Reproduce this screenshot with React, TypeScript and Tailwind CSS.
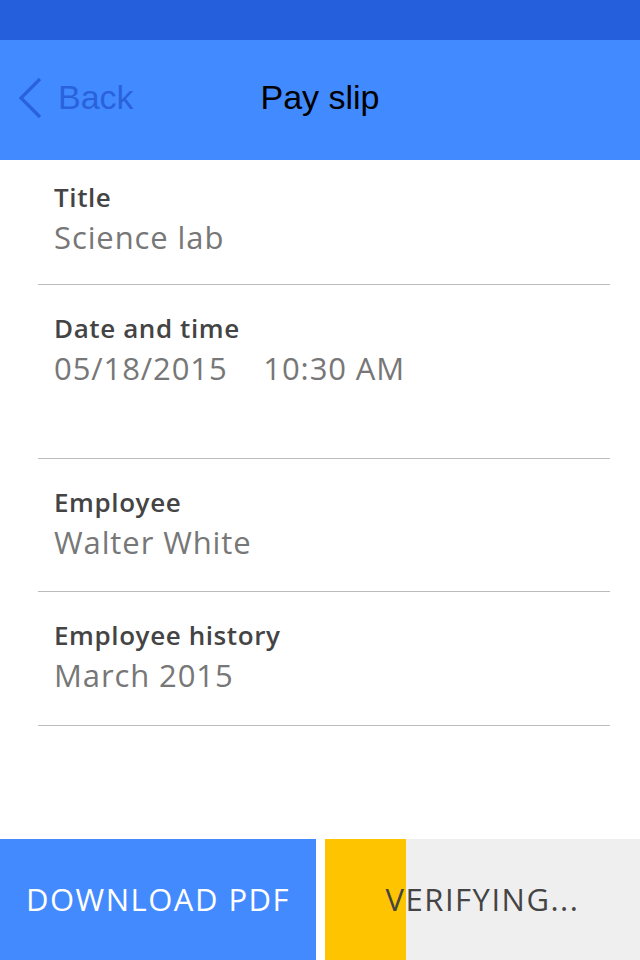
import React from "react";

const rows = [
  { label: "Title", value: "Science lab", h: "h-[125px]", pt: "pt-[22px]" },
  { label: "Date and time", value: "05/18/2015\u00a0\u00a0\u00a0\u00a010:30 AM", h: "h-[174px]", pt: "pt-[28px]" },
  { label: "Employee", value: "Walter White", h: "h-[133px]", pt: "pt-[28px]" },
  { label: "Employee history", value: "March 2015", h: "h-[134px]", pt: "pt-[28px]" },
];

export default function App() {
  return (
    <div className="w-[640px] h-[960px] bg-white flex flex-col overflow-hidden" style={{ fontFamily: "'Open Sans', Lato, sans-serif" }}>
      <div className="h-[40px] bg-[#265fdb] shrink-0" />
      <div className="h-[120px] bg-[#428aff] shrink-0 relative flex items-center pb-[6px]">
        <div className="flex items-center pl-[18px] gap-[16px] text-[#2962db]">
          <svg width="24" height="42" viewBox="0 0 24 42" className="mt-[2px]">
            <polyline points="22,2 3,21 22,40" fill="none" stroke="#2962db" strokeWidth="3.2" />
          </svg>
          <span className="text-[34px] leading-none" style={{ fontFamily: "'Liberation Sans', Arial, sans-serif" }}>Back</span>
        </div>
        <div className="absolute inset-0 flex items-center justify-center pb-[6px]">
          <span className="text-[34px] leading-none text-black" style={{ fontFamily: "'Liberation Sans', Arial, sans-serif" }}>Pay slip</span>
        </div>
      </div>
      <div className="ml-[38px] mr-[30px] flex flex-col">
        {rows.map((r) => (
          <div key={r.label} className={`${r.h} border-b border-[#bbbbbb] pl-[16px] ${r.pt}`}>
            <div className="text-[26px] leading-[30px] font-semibold text-[#444444] tracking-[0.6px]">{r.label}</div>
            <div className="mt-[5px] text-[31px] leading-[40px] text-[#777777] tracking-[0.9px]">{r.value}</div>
          </div>
        ))}
      </div>
      <div className="flex-1" />
      <div className="h-[121px] flex shrink-0">
        <div className="w-[316px] bg-[#448aff] flex items-center justify-center">
          <span className="text-[31px] text-white tracking-[1.5px]">DOWNLOAD PDF</span>
        </div>
        <div className="w-[9px] bg-white" />
        <div className="flex-1 bg-[#efefef] relative flex items-center justify-center">
          <div className="absolute left-0 top-0 bottom-0 w-[81px] bg-[#ffc400]" />
          <span className="relative text-[31px] text-[#444444] tracking-[1.5px]">VERIFYING...</span>
        </div>
      </div>
    </div>
  );
}
